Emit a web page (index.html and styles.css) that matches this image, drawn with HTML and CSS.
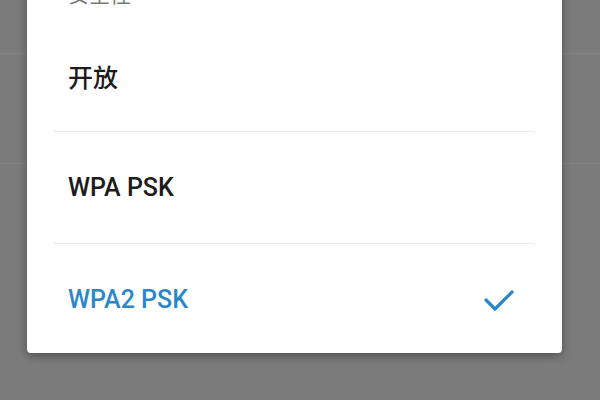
FILE: index.html
```html
<!DOCTYPE html>
<html lang="zh-CN">
<head>
    <meta charset="UTF-8">
    <meta name="viewport" content="width=device-width, initial-scale=1.0">
    <title>安全性</title>
    <link rel="stylesheet" href="styles.css">
</head>
<body>
    <div class="page">
        <div class="page-row"></div>
        <div class="page-row"></div>
    </div>

    <div class="dialog">
        <div class="dialog-title">安全性</div>
        <ul class="options">
            <li class="option">开放</li>
            <li class="option">WPA PSK</li>
            <li class="option selected">
                <span>WPA2 PSK</span>
                <svg class="check" width="30" height="22" viewBox="0 0 30 22">
                    <path d="M2 10 L11 19 L28 2" fill="none" stroke="currentColor" stroke-width="3.2" stroke-linecap="round" stroke-linejoin="round"/>
                </svg>
            </li>
        </ul>
    </div>
</body>
</html>
```

FILE: styles.css
```css
body {
    margin: 0;
    padding: 0;
    width: 600px;
    height: 400px;
    overflow: hidden;
    background: #7b7b7b;
    font-family: Roboto, "Noto Sans CJK SC", sans-serif;
    position: relative;
}
.page-row {
    height: 53px;
    border-bottom: 1px solid #828282;
}
.page-row + .page-row {
    height: 109px;
}
.dialog {
    position: absolute;
    left: 27px;
    top: -44px;
    width: 535px;
    height: 397px;
    background: #fff;
    border-radius: 4px;
    box-shadow: 0 3px 10px rgba(0, 0, 0, 0.35);
}
.dialog-title {
    padding: 22px 0 0 41px;
    height: 42px;
    font-size: 21px;
    color: #7a7a7a;
}
.options {
    list-style: none;
    margin: 0;
    padding: 0 28px 0 26px;
}
.option {
    display: flex;
    align-items: center;
    justify-content: space-between;
    height: 111px;
    padding: 0 20px 0 15px;
    font-size: 25px;
    font-weight: 500;
    color: #1c1c1c;
    border-bottom: 1px solid #ebebeb;
}
.option:last-child {
    border-bottom: none;
}
.option.selected {
    color: #2b87c9;
}
.check {
    color: #2b87c9;
    margin-top: 2px;
}
```
